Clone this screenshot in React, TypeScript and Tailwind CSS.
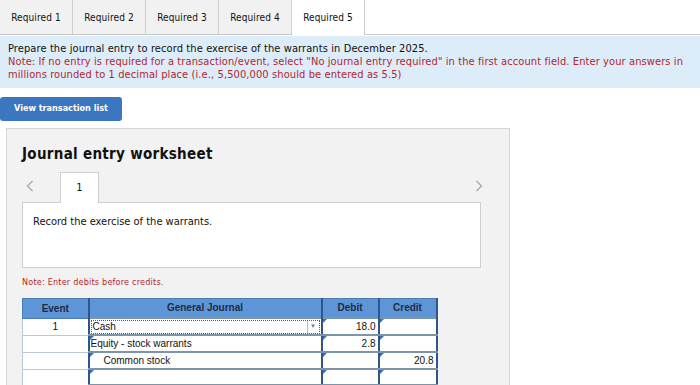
const tabs = ['Required 1', 'Required 2', 'Required 3', 'Required 4', 'Required 5']

const rows = [
  { event: '1', account: 'Cash', indent: false, debit: '18.0', credit: '', first: true },
  { event: '', account: 'Equity - stock warrants', indent: false, debit: '2.8', credit: '' },
  { event: '', account: 'Common stock', indent: true, debit: '', credit: '20.8' },
  { event: '', account: '', indent: false, debit: '', credit: '' },
]

function Marker() {
  return <span className="absolute left-0 top-0 w-0 h-0 border-t-[4px] border-t-[#3a6fb0] border-r-[4px] border-r-transparent" />
}

function Chevron({ right = false }: { right?: boolean }) {
  return (
    <svg width="8" height="12" viewBox="0 0 8 12" className="text-[#a8a8a8]">
      <path d={right ? 'M1.5 1 L6.5 6 L1.5 11' : 'M6.5 1 L1.5 6 L6.5 11'} fill="none" stroke="currentColor" strokeWidth="1.3" />
    </svg>
  )
}

export default function App() {
  const verdana = { fontFamily: '"DejaVu Sans Condensed", "DejaVu Sans", Verdana, sans-serif' }
  return (
    <div className="w-[700px] h-[385px] overflow-hidden bg-white text-[#111]" style={verdana}>
      <div className="flex h-[35px] border-b border-[#c9c9c9]">
        {tabs.map((t, i) => (
          <div
            key={t}
            className={`w-[73px] flex items-center justify-center text-[10px] tracking-[0.1px] border-r border-[#cfcfcf] ${
              i === 4 ? 'bg-white -mb-px' : 'bg-[#f1f1f1]'
            }`}
          >
            {t}
          </div>
        ))}
      </div>

      <div className="mt-[1px] bg-[#ddecf9] h-[52px] px-2 pt-[6px] text-[11px] leading-[13px] tracking-[0.1px]">
        <div>Prepare the journal entry to record the exercise of the warrants in December 2025.</div>
        <div className="text-[#b3262d]">
          Note: If no entry is required for a transaction/event, select "No journal entry required" in the first account field. Enter your answers in millions rounded to 1 decimal place (i.e., 5,500,000 should be entered as 5.5)
        </div>
      </div>

      <div className="mt-[9px] w-[122px] h-[24px] rounded-[3px] bg-[#3b76c0] text-white text-[9px] font-bold flex items-center justify-center">
        View transaction list
      </div>

      <div className="mt-[7px] ml-[6px] w-[504px] h-[260px] bg-[#f2f2f2] border border-[#d6d6d6] pl-[15px] pt-[16px]">
        <div className="text-[15px] font-bold leading-[18px] tracking-[0.3px]">Journal entry worksheet</div>

        <div className="mt-[9px] relative w-[459px]">
          <div className="flex items-end h-[30px]">
            <span className="w-[38px] pb-[10px] pl-[4px]">
              <Chevron />
            </span>
            <div className="w-[39px] h-[31px] -mb-px bg-white border border-b-0 border-[#cfcfcf] flex items-center justify-center text-[11px] relative z-10">
              1
            </div>
            <span className="ml-auto -mr-[2px] pb-[10px]">
              <Chevron right />
            </span>
          </div>
          <div className="h-[66px] bg-white border border-[#cfcfcf] pl-[10px] pt-[11px] text-[11px]">
            Record the exercise of the warrants.
          </div>
        </div>

        <div className="mt-[8px] text-[9px] text-[#b3262d] tracking-[0.2px]">Note: Enter debits before credits.</div>

        <table
          className="mt-[8px] border-collapse text-[10px]"
          style={{ fontFamily: '"Liberation Sans", Arial, sans-serif' }}
        >
          <thead>
            <tr className="h-[20px] bg-[#5e95d7] text-[#1d2c44] font-bold">
              <th className="w-[66px] border border-[#4a7cb8] font-bold">Event</th>
              <th className="w-[233px] border-y border-[#4a7cb8] border-x-2 border-x-[#2e568a] font-bold">General Journal</th>
              <th className="w-[57px] border-y border-[#4a7cb8] border-r-2 border-r-[#2e568a] font-bold">Debit</th>
              <th className="w-[58px] border-y border-[#4a7cb8] border-r-2 border-r-[#2e568a] font-bold">Credit</th>
            </tr>
          </thead>
          <tbody>
            {rows.map((r, i) => (
              <tr key={i} className="h-[16px] bg-white">
                <td className="border border-[#b9c7d6] text-center align-middle p-0">{r.event}</td>
                <td className="border-x-2 border-x-[#2e568a] border-y-2 border-y-[#7d94ad] p-0 relative">
                  {r.first ? (
                    <div className="mx-[1px] h-[14px] border border-dotted border-[#3b5f8c] flex items-center pl-[1px]">
                      <span className="flex-1">{r.account}</span>
                      <span className="w-[12px] h-full border-l border-[#bbb] flex items-center justify-center text-[6px] text-[#777]">▼</span>
                    </div>
                  ) : (
                    <>
                      <Marker />
                      <div className={`${r.indent ? 'pl-[14px]' : 'pl-[1px]'} h-[14px] flex items-center`}>{r.account}</div>
                    </>
                  )}
                </td>
                <td className="border-r-2 border-r-[#2e568a] border-y-2 border-y-[#7d94ad] p-0 relative text-right pr-[2px]">
                  <Marker />
                  {r.debit}
                </td>
                <td className="border-r-2 border-r-[#2e568a] border-y-2 border-y-[#7d94ad] p-0 relative text-right pr-[2px]">
                  <Marker />
                  {r.credit}
                </td>
              </tr>
            ))}
          </tbody>
        </table>
      </div>
    </div>
  )
}
